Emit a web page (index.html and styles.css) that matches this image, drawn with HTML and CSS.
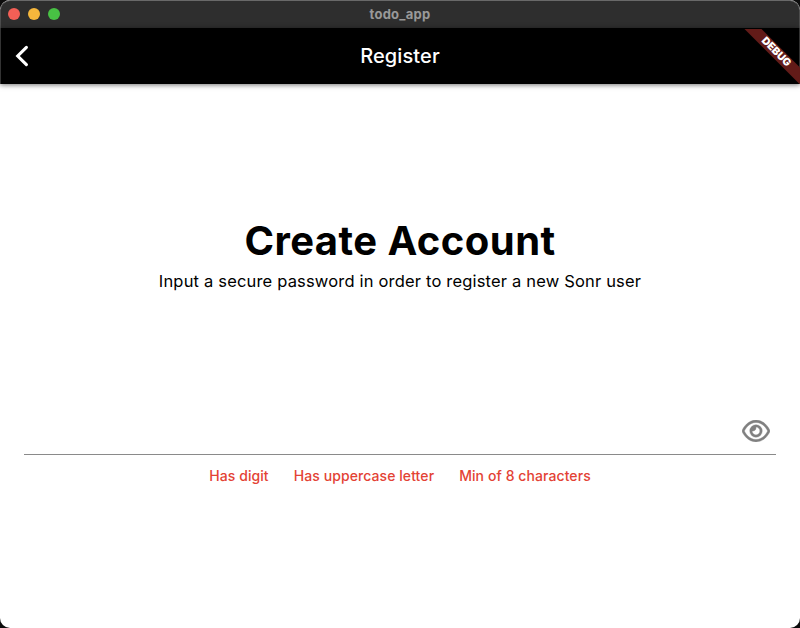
FILE: index.html
```
<!DOCTYPE html>
<html lang="en">
<head>
<meta charset="utf-8">
<title>todo_app</title>
<link rel="stylesheet" href="styles.css">
</head>
<body>
<div class="window">
  <div class="titlebar">
    <div class="lights"><i class="close"></i><i class="minimize"></i><i class="maximize"></i></div>
    <span class="window-title">todo_app</span>
  </div>
  <header class="appbar">
    <svg class="back" viewBox="0 0 24 24" aria-hidden="true"><path d="M17.4 3.3 8.7 12l8.7 8.7"/></svg>
    <h2>Register</h2>
    <div class="ribbon-clip"><div class="ribbon"><span>DEBUG</span></div></div>
  </header>
  <main>
    <h1>Create Account</h1>
    <p class="intro">Input a secure password in order to register a new Sonr user</p>
    <div class="field">
      <svg class="eye" viewBox="0 32 576 448" aria-hidden="true"><path d="M288 80C222.8 80 169.2 109.6 128.1 147.7C89.6 183.5 63 226 49.4 256C63 286 89.6 328.5 128.1 364.3C169.2 402.4 222.8 432 288 432s118.8-29.6 159.9-67.7C486.4 328.5 513 286 526.6 256C513 226 486.4 183.5 447.9 147.7C406.8 109.6 353.2 80 288 80zM95.4 112.6C142.5 68.8 207.2 32 288 32s145.5 36.8 192.6 80.6c46.8 43.5 78.1 95.4 93 131.1c3.3 7.9 3.3 16.7 0 24.6c-14.9 35.7-46.2 87.7-93 131.1C433.5 443.2 368.8 480 288 480s-145.5-36.8-192.6-80.6C48.6 356 17.3 304 2.5 268.3c-3.3-7.9-3.3-16.7 0-24.6C17.3 208 48.6 156 95.4 112.6zM288 336c44.2 0 80-35.8 80-80s-35.8-80-80-80c-.7 0-1.3 0-2 0c1.3 5.1 2 10.5 2 16c0 35.3-28.7 64-64 64c-5.5 0-10.9-.7-16-2c0 .7 0 1.3 0 2c0 44.2 35.8 80 80 80zM288 128a128 128 0 1 1 0 256a128 128 0 1 1 0-256z" fill-rule="evenodd"/></svg>
    </div>
    <div class="rules">
      <span>Has digit</span>
      <span>Has uppercase letter</span>
      <span>Min of 8 characters</span>
    </div>
  </main>
</div>
</body>
</html>
```
FILE: styles.css
```
* { box-sizing: border-box; }
html { background: #0c0c0c; }
body { margin: 0; font-family: Inter, sans-serif; color: #000; }
h1, h2, p { margin: 0; }
.window { height: 628px; border-radius: 10px; overflow: hidden; background: #fff; display: flex; flex-direction: column; }
.titlebar { height: 28px; flex: none; background: #2e2e2e; border: 1px solid #4c4c4c; border-top-color: #696969; border-bottom: 0; border-radius: 10px 10px 0 0; display: grid; grid-template-columns: 1fr auto 1fr; align-items: center; }
.lights { display: flex; gap: 8px; padding: 0 0 2px 7px; }
.lights i { width: 12px; height: 12px; border-radius: 50%; }
.close { background: #f35f56; }
.minimize { background: #f6b73c; }
.maximize { background: #48c144; }
.window-title { font-size: 13px; line-height: 24px; margin-top: -2px; font-weight: 700; color: #999; letter-spacing: .25px; }
.appbar { position: relative; height: 56px; flex: none; background: #000; border-left: 1px solid #333; border-right: 1px solid #333; box-shadow: 0 1px 5px rgba(0,0,0,.55); display: flex; align-items: center; }
.back { width: 24px; height: 24px; margin-left: 8px; fill: none; stroke: #fff; stroke-width: 3.1; stroke-linecap: round; }
h2 { flex: 1; margin-right: 32px; text-align: center; font-size: 20px; line-height: 24px; font-weight: 550; letter-spacing: .1px; color: #fff; }
.ribbon-clip { position: absolute; top: 1px; right: -1px; width: 56px; height: 55px; overflow: hidden; }
.ribbon { position: absolute; left: -12px; top: 16px; width: 86px; height: 12px; background: #621b18; transform: rotate(45deg); display: flex; align-items: center; justify-content: center; }
.ribbon span { font-size: 10.5px; line-height: 12px; font-weight: 900; color: #fff; padding-left: 3px; }
main { flex: 1; padding: 132px 24px 0; }
h1 { text-align: center; font-size: 40px; line-height: 50px; font-weight: 700; white-space: nowrap; letter-spacing: .45px; }
.intro { text-align: center; font-size: 16.5px; line-height: 24px; margin-top: 3px; white-space: nowrap; letter-spacing: .18px; }
.field { height: 48px; margin-top: 114px; border-bottom: 1px solid #8a8a8a; display: flex; justify-content: flex-end; padding: 13px 6px 0 0; }
.eye { width: 28px; height: 22px; fill: #808080; stroke: #808080; stroke-width: 8; }
.rules { display: flex; justify-content: center; gap: 25px; margin-top: 11px; font-size: 14px; line-height: 20px; font-weight: 550; letter-spacing: .08px; color: #e34234; white-space: nowrap; }
```
